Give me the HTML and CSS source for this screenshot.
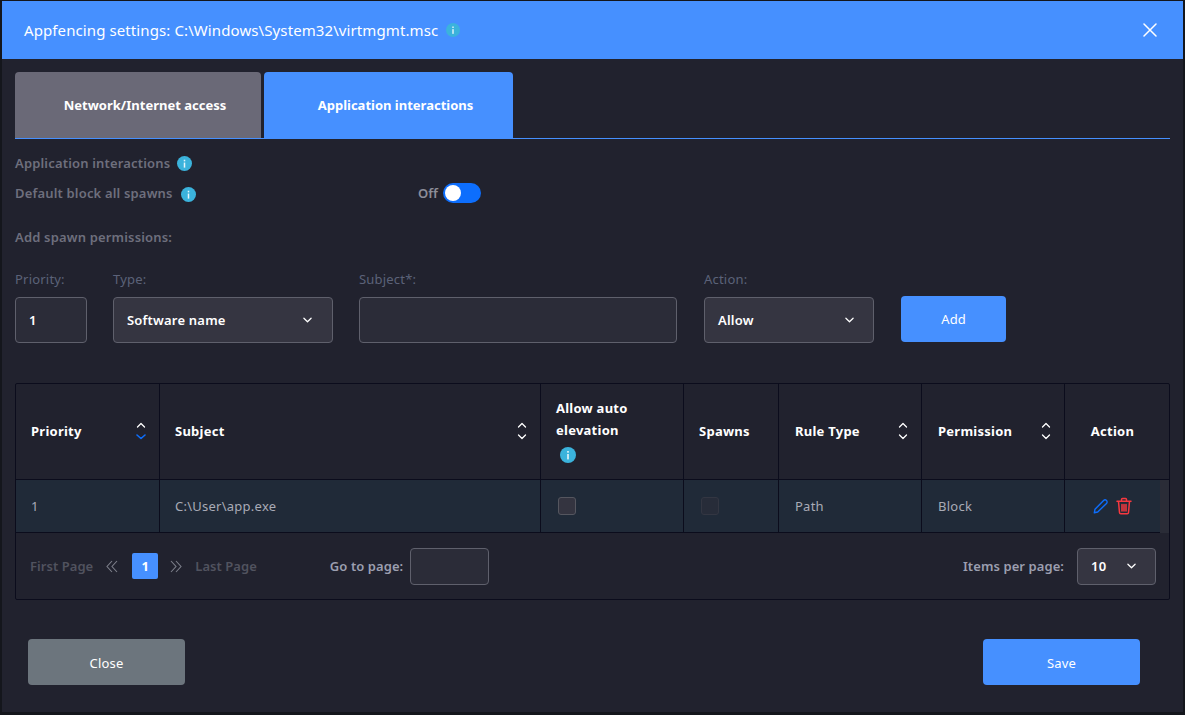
FILE: index.html
```html
<!DOCTYPE html>
<html lang="en">
<head>
<meta charset="utf-8">
<title>Appfencing settings</title>
<link rel="stylesheet" href="styles.css">
</head>
<body>
<svg class="defs" width="0" height="0" aria-hidden="true">
  <symbol id="info" viewBox="0 0 16 16"><circle cx="8" cy="8" r="8" fill="#3bb3dc"/><rect x="7.2" y="7" width="1.6" height="5.4" fill="#e6f6fb"/><rect x="7.2" y="4" width="1.6" height="1.7" fill="#e6f6fb"/></symbol>
  <symbol id="chev" viewBox="0 0 10 6"><path d="M1 1l4 4 4-4" fill="none" stroke="currentColor" stroke-width="1.4" stroke-linecap="round" stroke-linejoin="round"/></symbol>
  <symbol id="sort" viewBox="0 0 10 18"><path d="M1.5 5L5 1.5 8.500 5" fill="none" stroke="#fff" stroke-width="1.3" stroke-linecap="round" stroke-linejoin="round"/><path d="M1.500 13L5 16.500 8.500 13" fill="none" stroke="#fff" stroke-width="1.3" stroke-linecap="round" stroke-linejoin="round"/></symbol>
  <symbol id="sort-down" viewBox="0 0 10 18"><path d="M1.5 5L5 1.500 8.500 5" fill="none" stroke="#fff" stroke-width="1.3" stroke-linecap="round" stroke-linejoin="round"/><path d="M1 13L5 16.500 9 13" fill="none" stroke="#0d6efd" stroke-width="1.6" stroke-linecap="round" stroke-linejoin="round"/></symbol>
</svg>
<main class="modal">
  <header class="modal-head">
    <h1 class="modal-title">Appfencing settings: C:\Windows\System32\virtmgmt.msc</h1>
    <svg class="info info-title"><use href="#info"/></svg>
    <svg class="close-x" viewBox="0 0 14 14"><path d="M1 1l12 12M13 1L1 13" stroke="#fff" stroke-width="1.500" stroke-linecap="round"/></svg>
  </header>
  <div class="modal-body">
    <nav class="tabs">
      <div class="tab tab-grey">Network/Internet access</div>
      <div class="tab tab-blue">Application interactions</div>
    </nav>
    <div class="line line-a"><span>Application interactions</span><svg class="info"><use href="#info"/></svg></div>
    <div class="line line-b">
      <div class="line-label"><span>Default block all spawns</span><svg class="info"><use href="#info"/></svg></div>
      <span class="off">Off</span>
      <span class="switch"><span class="knob"></span></span>
    </div>
    <div class="line line-c">Add spawn permissions:</div>
    <form class="add-form">
      <div class="field f-priority"><label>Priority:</label><div class="box">1</div></div>
      <div class="field f-type"><label>Type:</label><div class="box select">Software name<svg class="chev"><use href="#chev"/></svg></div></div>
      <div class="field f-subject"><label>Subject*:</label><div class="box"></div></div>
      <div class="field f-action"><label>Action:</label><div class="box select">Allow<svg class="chev"><use href="#chev"/></svg></div></div>
      <div class="add-btn">Add</div>
    </form>
    <section class="table">
      <div class="grid thead">
        <div class="th">Priority<svg class="sort"><use href="#sort-down"/></svg></div>
        <div class="th">Subject<svg class="sort"><use href="#sort"/></svg></div>
        <div class="th th-stack"><span>Allow auto elevation</span><svg class="info"><use href="#info"/></svg></div>
        <div class="th">Spawns</div>
        <div class="th">Rule Type<svg class="sort"><use href="#sort"/></svg></div>
        <div class="th">Permission<svg class="sort"><use href="#sort"/></svg></div>
        <div class="th">Action</div>
      </div>
      <div class="row-wrap">
        <div class="grid tbody">
          <div class="td">1</div>
          <div class="td">C:\User\app.exe</div>
          <div class="td"><span class="check"></span></div>
          <div class="td"><span class="check check-off"></span></div>
          <div class="td">Path</div>
          <div class="td">Block</div>
          <div class="td td-actions">
            <svg class="ic-edit" viewBox="0 0 15 15"><path d="M10.600 1.500a1.800 1.800 0 0 1 2.900 2.900L4.700 13 1.300 13.800 2 10.200z" fill="none" stroke="#0d6efd" stroke-width="1.400" stroke-linejoin="round"/></svg>
            <svg class="ic-trash" viewBox="0 0 16 18"><path d="M1 4.200h14M5.500 4V2.500a1 1 0 0 1 1-1h3a1 1 0 0 1 1 1V4M2.500 4.500l1 11a1.300 1.300 0 0 0 1.300 1.200h6.400a1.300 1.300 0 0 0 1.300-1.200l1-11M6 7.500v6.500M8 7.500v6.500M10 7.500v6.500" fill="none" stroke="#f8383f" stroke-width="1.500" stroke-linecap="round" stroke-linejoin="round"/></svg>
          </div>
        </div>
        <div class="scrollbar"></div>
      </div>
      <div class="pager">
        <span class="pg-dim pg-first">First Page</span>
        <svg class="dbl dbl-prev" viewBox="0 0 12 13"><path d="M6 1L1 6.500l5 5.500M11 1L6 6.500l5 5.500" fill="none" stroke="#7e808b" stroke-width="1.100"/></svg>
        <span class="pg-cur">1</span>
        <svg class="dbl dbl-next" viewBox="0 0 12 13"><path d="M1 1l5 5.500-5 5.500M6 1l5 5.500-5 5.500" fill="none" stroke="#7e808b" stroke-width="1.100"/></svg>
        <span class="pg-dim pg-last">Last Page</span>
        <span class="pg-label pg-go">Go to page:</span>
        <div class="box goto"></div>
        <span class="pg-label pg-items">Items per page:</span>
        <div class="box select perpage">10<svg class="chev"><use href="#chev"/></svg></div>
      </div>
    </section>
    <footer class="foot">
      <div class="btn btn-close">Close</div>
      <div class="btn btn-save">Save</div>
    </footer>
  </div>
</main>
</body>
</html>
```
FILE: styles.css
```css
* { box-sizing: border-box; }
html, body { margin: 0; height: 100%; }
body {
  background: #14161c;
  font-family: "Noto Sans", "Open Sans", sans-serif;
  font-size: 13px;
  color: #fff;
  overflow: hidden;
  padding: 1px 2px 0;
}
.defs { position: absolute; }
.modal { width: 1181px; height: 711px; background: #21222e; display: flex; flex-direction: column; }
.modal-head {
  height: 58px; flex: none; background: #4690ff;
  display: flex; align-items: center; padding: 0 26px 0 22px;
}
.modal-title { margin: 0; font-size: 15px; font-weight: 400; line-height: 20px; letter-spacing: 0.1px; }
.info { width: 15px; height: 15px; flex: none; }
.info-title { margin-left: 8px; width: 14px; height: 14px; }
.close-x { width: 14px; height: 14px; margin-left: auto; }
.modal-body { padding: 13px 13px 0; flex: 1; display: flex; flex-direction: column; }
.tabs { display: flex; gap: 3px; height: 67px; border-bottom: 1px solid #4690ff; flex: none; }
.tab {
  height: 66px; display: flex; align-items: center; justify-content: center;
  font-weight: 700; font-size: 13px; border-radius: 4px 4px 0 0; padding-left: 14px;
}
.tab-grey { width: 246px; background: #6a6977; }
.tab-blue { width: 249px; background: #4690ff; }
.line { color: #6e6f7d; font-weight: 600; font-size: 13px; display: flex; align-items: center; letter-spacing: 0.17px; }
.line .info { margin: 1px 0 0 7px; }
.line-a { margin-top: 14px; height: 20px; }
.line-b { margin-top: 10px; height: 20px; }
.line-label { width: 403px; display: flex; align-items: center; }
.line-label .info { margin: 2px 0 0 8px; }
.off { color: #8d8e99; width: 25px; letter-spacing: 0; }
.switch { width: 38px; height: 20px; border-radius: 10px; background: #0d6efd; display: flex; align-items: center; padding-left: 2px; }
.knob { width: 16px; height: 16px; background: #fff; border-radius: 50%; }
.line-c { margin-top: 24px; height: 20px; }
.add-form { display: flex; margin-top: 23px; align-items: flex-end; }
.field { display: flex; flex-direction: column; }
.field label { color: #5c6279; font-size: 13px; line-height: 18px; margin-bottom: 9px; letter-spacing: 0.2px; }
.box {
  height: 46px; border: 1px solid #5f606c; border-radius: 4px; background: #2b2c38;
  display: flex; align-items: center; padding: 0 13px; font-weight: 600; font-size: 13px; letter-spacing: 0.2px;
}
.select { background: #353541; justify-content: space-between; }
.chev { width: 9px; height: 6px; color: #fff; margin-right: 7px; }
.f-action .chev, .perpage .chev { margin-right: 6px; }
.f-priority { width: 72px; margin-right: 26px; }
.f-type { width: 220px; margin-right: 26px; }
.f-subject { width: 318px; margin-right: 27px; }
.f-action { width: 170px; margin-right: 27px; }
.add-btn {
  width: 105px; height: 46px; margin-bottom: 1px; background: #4690ff; border-radius: 4px;
  display: flex; align-items: center; justify-content: center; font-size: 13px;
}
.table { margin-top: 40px; height: 217px; border: 1px solid #0b0c1c; border-radius: 2px; flex: none; }
.grid { display: grid; grid-template-columns: 144px 381px 143px 95px 143px 143px 1fr; }
.thead { height: 96px; border-bottom: 1px solid #0b0c1c; }
.th {
  border-right: 1px solid #0b0c1c; padding: 0 15px 2px;
  display: flex; align-items: center; justify-content: space-between;
  font-weight: 700; font-size: 13px; line-height: 22px; letter-spacing: 0.25px;
}
.th:nth-child(5), .th:nth-child(6) { padding-left: 16px; }
.th:last-child { border-right: 0; justify-content: center; padding: 0 9px 2px 0; }
.th-stack { flex-direction: column; align-items: flex-start; justify-content: center; padding-bottom: 3px; }
.th-stack .info { margin: 6px 0 0 4px; height: 16px; width: 16px; }
.sort { width: 10px; height: 18px; margin-right: -2px; }
.row-wrap { display: flex; height: 53px; border-bottom: 1px solid #0b0c1c; }
.tbody { background: #202a38; flex: none; width: 1144px; grid-template-columns: 144px 381px 143px 95px 143px 143px 95px; }
.td {
  border-right: 1px solid #0b0c1c; padding: 0 15px; display: flex; align-items: center;
  color: #a9abb6; font-size: 13px; letter-spacing: 0.25px;
}
.td:nth-child(5), .td:nth-child(6) { padding-left: 16px; }
.td:last-child { border-right: 0; }
.scrollbar { flex: 1; background: #2a2c37; margin-bottom: -1px; }
.check { width: 18px; height: 18px; margin-left: 2px; border-radius: 3px; background: #343440; border: 1px solid #55565f; }
.check-off { background: #272c39; border-color: #333642; }
.td-actions { padding: 0 0 0 28px; gap: 8px; }
.ic-edit { width: 15px; height: 15px; flex: none; }
.ic-trash { width: 16px; height: 18px; flex: none; }
.pager { height: 66px; display: flex; align-items: center; padding: 0 13px 0 14px; }
.pg-dim { color: #51535f; font-weight: 600; font-size: 13px; letter-spacing: 0.05px; }
.dbl { width: 12px; height: 13px; flex: none; }
.dbl-prev { margin: 0 14px 0 13px; }
.dbl-next { margin: 0 13px 0 12px; }
.pg-cur { width: 26px; height: 26px; background: #4690ff; border-radius: 2px; display: flex; align-items: center; justify-content: center; font-weight: 700; font-size: 13px; }
.pg-label { color: #9c9fb0; font-weight: 600; font-size: 13px; letter-spacing: 0.08px; }
.pg-go { margin-left: 73px; }
.goto { width: 79px; height: 37px; margin-left: 7px; }
.pg-items { margin-left: auto; margin-right: 13px; }
.perpage { width: 79px; height: 37px; }
.foot { display: flex; justify-content: space-between; padding: 39px 30px 0 13px; }
.btn { width: 157px; height: 46px; border-radius: 4px; display: flex; align-items: center; justify-content: center; font-size: 13px; padding-top: 1px; letter-spacing: 0.2px; }
.btn-close { background: #6c757d; }
.btn-save { background: #4690ff; }
```
